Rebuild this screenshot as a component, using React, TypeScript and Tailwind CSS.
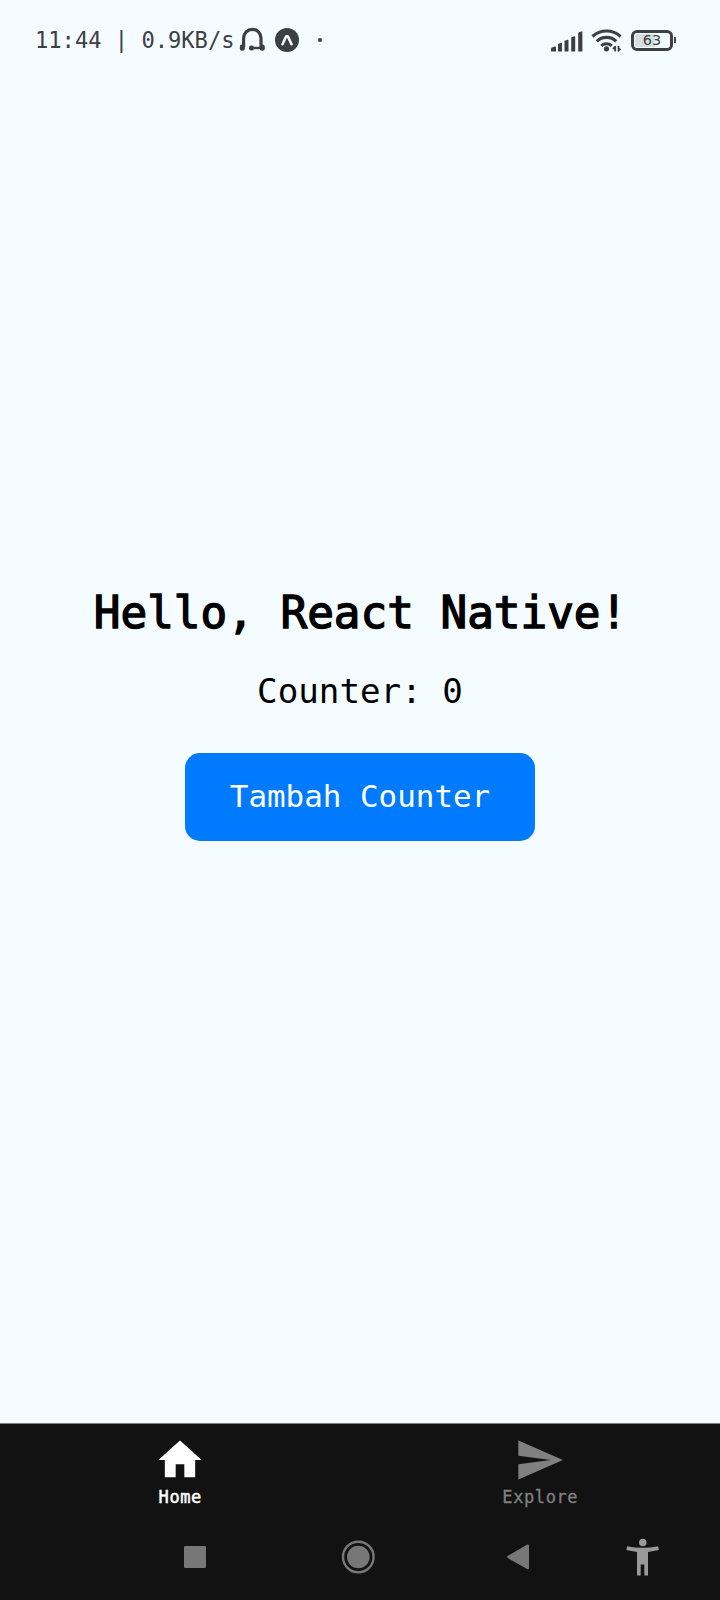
import { useState } from "react";

function StatusBar() {
  return (
    <header className="flex h-20 shrink-0 items-center pl-[35px] pr-[44px] text-[#3c4043]">
      <span className="w-[199px] whitespace-pre text-[22.1px] leading-8">11:44 | 0.9KB/s</span>
      <svg className="ml-[5px] shrink-0" width="26" height="26" viewBox="0 0 26 26" fill="none">
        <path d="M4.6 20.5V11a8.7 8.7 0 0 1 17.4 0V20.5" stroke="currentColor" strokeWidth="3.2" />
        <path d="M13 21h9" stroke="currentColor" strokeWidth="2.4" />
        <rect x="0.8" y="17.6" width="5" height="6.2" rx="2.2" fill="currentColor" />
        <rect x="10" y="18.6" width="5" height="4.8" rx="2.2" fill="currentColor" />
        <rect x="20.8" y="17.6" width="5" height="6.2" rx="2.2" fill="currentColor" />
      </svg>
      <svg className="ml-[10px] shrink-0" width="24" height="24" viewBox="0 0 24 24" fill="none">
        <circle cx="12" cy="12" r="12" fill="currentColor" />
        <path d="M7.5 16.2 11.2 8.2h1.6l3.7 8" stroke="#f5fcff" strokeWidth="2.6" strokeLinecap="round" strokeLinejoin="round" />
      </svg>
      <span className="ml-[19px] size-1 rounded-full bg-current" />
      <div className="ml-auto flex items-center">
        <svg className="translate-y-px" width="32" height="21" viewBox="0 0 32 21" fill="currentColor">
          <path d="M0 20.5v-2.5q0-1.2 1-1.5l3-1q1-.2 1 .6v4.4z" />
          <path d="M7 20.5v-7q0-.8.8-1l2.4-.6q.8-.2.8.6v8z" />
          <path d="M13.5 20.5V10.4q0-.8.8-1l2.4-.6q.8-.2.8.6v11.1z" />
          <path d="M20.2 20.5V6.9q0-.8.8-1l2.4-.6q.8-.2.8.6v14.6z" />
          <path d="M27.2 20.5V2.2q0-.8.8-1l2.4-.8q1-.3 1 .6v19.5z" />
        </svg>
        <svg className="ml-[8px]" width="32" height="24" viewBox="0 0 32 24" fill="none" stroke="currentColor" strokeWidth="3.1">
          <path d="M1.5 8.5a20.5 20.5 0 0 1 28 0M5.8 13.3a14 14 0 0 1 19.4 0M10.2 17.8a8 8 0 0 1 10.6 0" />
          <circle cx="15.5" cy="20.8" r="2.6" fill="currentColor" stroke="none" />
          <path d="M24.2 23.5v-5.5M27.5 18v5.5M22 21l2-2M29.4 20.6l-2 2" strokeWidth="1.8" />
        </svg>
        <div className="ml-[8px] flex h-[21px] w-[42px] items-center rounded-[6px] border-3 border-current p-px">
          <div className="flex h-full w-full items-center justify-center rounded-[2px] bg-gradient-to-r from-[#d7dee1] from-60% to-transparent to-60% font-['DejaVu_Sans',sans-serif] text-[14.5px] leading-none">
            63
          </div>
        </div>
        <div className="ml-px h-1.5 w-[2px] rounded-r-[1px] bg-current" />
      </div>
    </header>
  );
}

function TabBar() {
  return (
    <nav className="grid h-[105px] shrink-0 grid-cols-2 border-t border-[#7d8183]">
      <button className="flex flex-col items-center pt-[10px] text-white">
        <svg width="52" height="52" viewBox="0 0 24 24" fill="currentColor">
          <path d="M10 20v-6h4v6h5v-8h3L12 3 2 12h3v8z" />
        </svg>
        <span className="pl-[0.5px] text-[17px] leading-[22px] tracking-[0.6px] [-webkit-text-stroke:0.5px_white]">Home</span>
      </button>
      <button className="flex flex-col items-center pt-[10px] text-[#808080]">
        <svg width="52" height="52" viewBox="0 0 24 24" fill="currentColor">
          <path d="M2.01 21 22.6 12 2.01 3 2 10l15 2-15 2z" />
        </svg>
        <span className="pl-[0.5px] text-[17px] leading-[22px] tracking-[0.6px] [-webkit-text-stroke:0.3px_#808080]">Explore</span>
      </button>
    </nav>
  );
}

function SystemNav() {
  return (
    <div className="flex h-[72px] shrink-0 items-center pb-[14px] pl-[184px] text-[#777777]">
      <div className="size-[22px] rounded-[1px] bg-current" />
      <svg className="ml-[135px]" width="34" height="34" viewBox="0 0 34 34">
        <circle cx="17.3" cy="17" r="15.3" fill="none" stroke="currentColor" strokeWidth="2.4" />
        <circle cx="17.3" cy="17" r="11.3" fill="currentColor" />
      </svg>
      <svg className="ml-[132px]" width="22" height="26" viewBox="0 0 22 26" fill="currentColor">
        <path d="M19.8.8Q22 0 22 2v22q0 2-2 1L1 14.2q-1.6-1.2 0-2.4z" />
      </svg>
      <svg className="ml-[97px] text-[#999999]" width="34" height="38" viewBox="0 0 34 38" fill="currentColor">
        <circle cx="16.8" cy="4.5" r="3.8" />
        <path d="M1 8.3Q17 11.3 32.2 8.3l.6 3.8q-5 1.3-10.8 1.8V37.5h-3.7V26.4h-3.6v11.1H11V13.9Q5 13.4.4 12.1z" />
      </svg>
    </div>
  );
}

export default function App() {
  const [count, setCount] = useState(0);

  return (
    <div className="flex h-[1600px] w-[720px] flex-col overflow-hidden bg-[#f5fcff] font-['DejaVu_Sans_Mono',monospace]">
      <StatusBar />
      <main className="flex flex-1 flex-col items-center pt-[501px] text-black">
        <h1 className="whitespace-nowrap pl-px text-[44.3px] leading-[64px] [-webkit-text-stroke:1.4px_black]">Hello, React Native!</h1>
        <p className="mt-[26px] text-[34.2px] leading-10">Counter: {count}</p>
        <button
          onClick={() => setCount(count + 1)}
          className="mt-[42px] h-[88px] w-[350px] rounded-[15px] bg-[#007bff] pb-0.5 text-[30.9px] leading-10 text-white"
        >
          Tambah Counter
        </button>
      </main>
      <footer className="flex shrink-0 flex-col bg-[#121212]">
        <TabBar />
        <SystemNav />
      </footer>
    </div>
  );
}
